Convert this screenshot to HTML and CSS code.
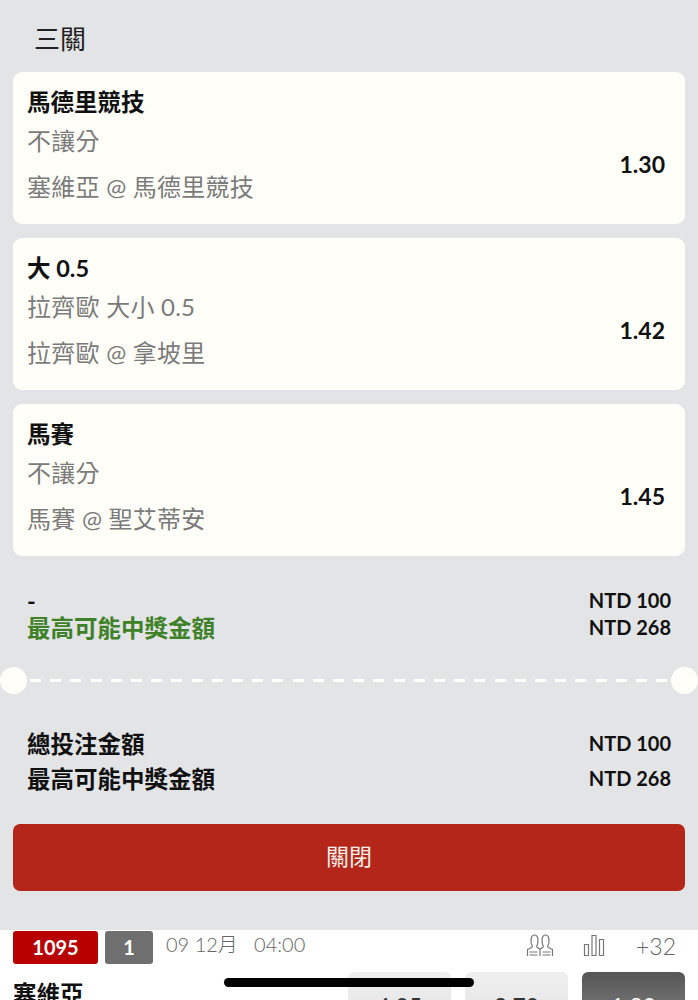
FILE: index.html
```html
<!doctype html>
<html lang="zh-Hant">
<head>
<meta charset="utf-8" />
<title>三關</title>
<link rel="stylesheet" href="styles.css">
</head>
<body>
 <div class="sheet">
   <h2 class="title">三關</h2>

   <div class="leg">
     <div class="leg-info">
       <div class="pick">馬德里競技</div>
       <div class="sub">不讓分</div>
       <div class="sub">塞維亞 @ 馬德里競技</div>
     </div>
     <div class="odds">1.30</div>
   </div>
   <div class="leg">
     <div class="leg-info">
       <div class="pick">大 0.5</div>
       <div class="sub">拉齊歐 大小 0.5</div>
       <div class="sub">拉齊歐 @ 拿坡里</div>
     </div>
     <div class="odds">1.42</div>
   </div>
   <div class="leg">
     <div class="leg-info">
       <div class="pick">馬賽</div>
       <div class="sub">不讓分</div>
       <div class="sub">馬賽 @ 聖艾蒂安</div>
     </div>
     <div class="odds">1.45</div>
   </div>

   <div class="summary top">
     <div class="row"><span>-</span><span class="amt">NTD 100</span></div>
     <div class="row"><span class="green">最高可能中獎金額</span><span class="amt">NTD 268</span></div>
   </div>

   <div class="tear"><span class="dot"></span><span class="dash"></span><span class="dot"></span></div>

   <div class="summary bottom">
     <div class="row"><span>總投注金額</span><span class="amt">NTD 100</span></div>
     <div class="row"><span>最高可能中獎金額</span><span class="amt">NTD 268</span></div>
   </div>

   <button class="close">關閉</button>
 </div>

 <div class="match">
   <div class="match-head">
     <span class="tag red">1095</span>
     <span class="tag grey">1</span>
     <span class="time">09 12月&nbsp;&nbsp;&nbsp;04:00</span>
     <span class="tools">
       <svg class="ico" width="28" height="23" viewBox="0 0 28 23" aria-hidden="true">
         <path d="M6.500 13C4 8 4.500 1 8.500 1S13 8 10.500 13M21.500 13C24 8 23.500 1 19.500 1S15 8 17.500 13M6.500 13L1.500 15.500V22M21.500 13l5 2.500V22M10.500 13l3.500 2 3.500-2M14 15v7M3.500 18h8M3.500 21h8M16.500 18h8M16.500 21h8"/>
       </svg>
       <svg class="ico" width="22" height="21" viewBox="0 0 22 21" aria-hidden="true">
         <path d="M1.500 9.500h4v11h-4zM9 .5h4v20h-4zM16.500 4.500h4v16h-4z"/>
       </svg>
       <span class="more">+32</span>
     </span>
   </div>
   <div class="match-body">
     <span class="team">塞維亞</span>
     <span class="btns">
       <span class="btn">4.05</span>
       <span class="btn">3.70</span>
       <span class="btn dark">1.80</span>
     </span>
   </div>
 </div>

 <div class="home-bar"></div>
</body>
</html>
```

FILE: styles.css
```css
*{box-sizing:border-box;margin:0;padding:0}
html,body{height:1000px;overflow:hidden}
body{
  position:relative;
  background:#e3e4e6;color:#111;
  font-family:Lato,"Noto Sans CJK TC",sans-serif;
}
.sheet{height:930px;padding:0 13px;display:flex;flex-direction:column}
.title{height:72px;padding:22px 0 0 21px;font-size:26px;line-height:34px;font-weight:400;color:#222}

.leg{
  height:152px;margin-bottom:14px;padding:15px 20px 0 14px;
  background:#fffef8;border-radius:9px;
  display:flex;justify-content:space-between;align-items:center;
}
.leg-info{align-self:flex-start}
.pick{font-size:23.500px;line-height:30px;font-weight:700;color:#111}
.sub{font-size:24px;line-height:32px;margin-top:14px;color:#7b7b7b;letter-spacing:.25px}
.pick + .sub{margin-top:8px}
.odds{font-size:23px;font-weight:700;color:#111;margin-top:16px}

.summary{padding:0 14px;font-size:23.500px;font-weight:700}
.summary.top{margin-top:18px;line-height:27px}
.summary.bottom{margin-top:34px;line-height:35px}
.row{display:flex;justify-content:space-between;align-items:center}
.amt{font-size:20px;margin-top:-2px}
.green{color:#3f8129}

.tear{height:26px;margin:25px -13px 0;display:flex;align-items:center}
.dot{width:27px;height:27px;border-radius:50%;background:#fffef8;flex:none}
.dash{flex:1;margin:0 3px;height:3px;background:repeating-linear-gradient(90deg,#fffef8 0 11px,transparent 11px 20.200px)}

.close{
  height:67px;margin-top:27px;padding-bottom:5px;border:0;border-radius:7px;
  background:#b5261a;color:#f5efe8;
  font-family:inherit;font-size:23px;
}

.match{height:70px;background:#fff;padding:0 13px;overflow:hidden}
.match-head{height:34px;display:flex;align-items:center;gap:7px}
.tag{height:33px;border-radius:3px;color:#fff;font-size:20px;font-weight:700;display:flex;align-items:center;justify-content:center}
.red{width:85px;background:#b90000}
.grey{width:48px;background:#6f6f6f}
.time{margin-left:6px;font-size:20px;color:#666;margin-top:-7px;font-weight:300}
.tools{margin-left:auto;display:flex;align-items:center;gap:29px;padding-right:9px;color:#666;margin-top:-3px}
.ico{fill:none;stroke:#777;stroke-width:1.200}
.more{font-size:23px;font-weight:300;margin-left:2px}

.match-body{display:flex;justify-content:space-between;margin-top:8px}
.team{font-size:23.500px;font-weight:700;line-height:38px;margin-top:3px}
.btns{display:flex;gap:14px}
.btn{width:103px;height:60px;border-radius:6px;background:linear-gradient(#efefef,#e3e3e3);text-align:center;padding-top:20px;font-size:23px;color:#333}
.btn.dark{background:linear-gradient(#555,#888);color:#fff}

.home-bar{
  position:absolute;left:224px;top:978px;
  width:250px;height:9px;border-radius:5px;background:#000;
}
```
